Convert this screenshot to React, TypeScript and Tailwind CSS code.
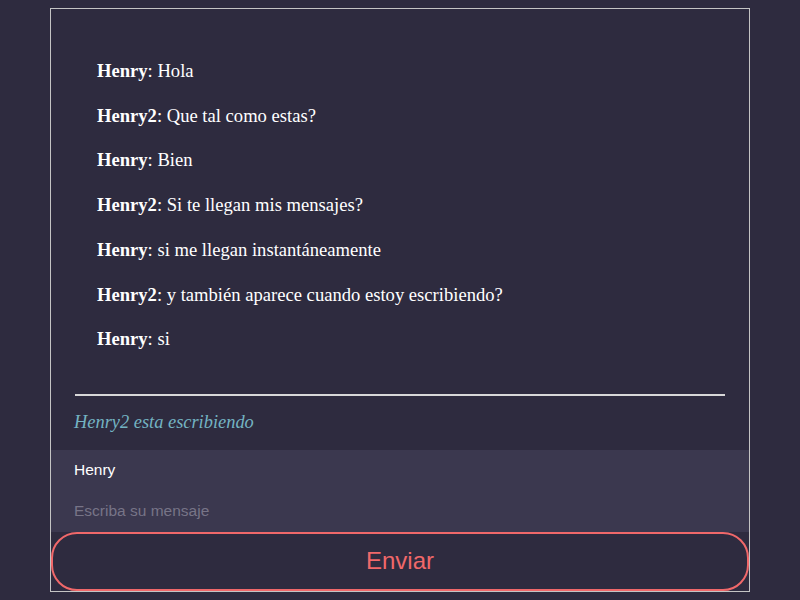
const messages = [
  { user: "Henry", text: "Hola" },
  { user: "Henry2", text: "Que tal como estas?" },
  { user: "Henry", text: "Bien" },
  { user: "Henry2", text: "Si te llegan mis mensajes?" },
  { user: "Henry", text: "si me llegan instantáneamente" },
  { user: "Henry2", text: "y también aparece cuando estoy escribiendo?" },
  { user: "Henry", text: "si" },
];

export default function App() {
  return (
    <div className="w-[800px] h-[600px] bg-[#2e2b3f] pt-2 overflow-hidden">
      <div className="mx-auto w-[700px] h-[584px] border border-[#c4c4c4] bg-[#2e2b3f] flex flex-col">
        <ul className="flex flex-col gap-6 pt-[52px] pl-[46px] font-['Liberation_Serif',serif] text-[18.6px] leading-[20.7px] text-white">
          {messages.map((m, i) => (
            <li key={i}>
              <strong>{m.user}</strong>: {m.text}
            </li>
          ))}
        </ul>
        <hr className="mx-6 mt-[44px] border-t-2 border-[#d8d8d8]" />
        <p className="pl-[23px] pt-[13px] h-[54px] font-['Liberation_Serif',serif] italic text-[18.4px] text-[#74b3c2]">
          Henry2 esta escribiendo
        </p>
        <div className="bg-[#3b384f] h-[82px] flex flex-col pl-[23px] pr-6 font-['Liberation_Sans',sans-serif] text-[15.5px]">
          <input
            className="h-[41px] bg-transparent text-white outline-none"
            defaultValue="Henry"
          />
          <input
            className="h-[41px] bg-transparent text-white outline-none placeholder:text-[#777487]"
            placeholder="Escriba su mensaje"
          />
        </div>
        <button className="flex-1 rounded-[26px] border-2 border-[#f0686a] bg-[#2e2b3f] text-[#f0686a] font-['Liberation_Sans',sans-serif] text-[24px]">
          Enviar
        </button>
      </div>
    </div>
  );
}
